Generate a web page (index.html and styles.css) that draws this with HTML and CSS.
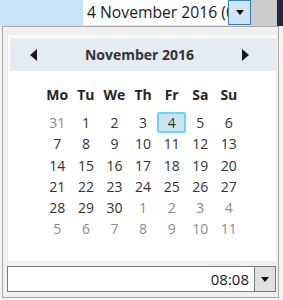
FILE: index.html
```html
<!DOCTYPE html>
<html lang="en">
<head>
  <meta charset="UTF-8">
  <title>Date picker</title>
  <link rel="stylesheet" href="styles.css">
</head>
<body>
  <div class="topbar">
    <div class="pane"></div>
    <div class="field">
      <span class="field-text">4 November 2016 (08:08)</span>
      <span class="drop-btn active"><span class="caret"></span></span>
    </div>
    <div class="gray"></div>
    <div class="dark"></div>
  </div>

  <div class="popup">
    <div class="calendar">
      <div class="cal-header">
        <span class="arrow left"></span>
        <span class="month">November 2016</span>
        <span class="arrow right"></span>
      </div>
      <div class="grid weekdays">
        <span>Mo</span><span>Tu</span><span>We</span><span>Th</span><span>Fr</span><span>Sa</span><span>Su</span>
      </div>
      <div class="grid days">
        <span class="other">31</span><span>1</span><span>2</span><span>3</span><span class="selected">4</span><span>5</span><span>6</span>
        <span>7</span><span>8</span><span>9</span><span>10</span><span>11</span><span>12</span><span>13</span>
        <span>14</span><span>15</span><span>16</span><span>17</span><span>18</span><span>19</span><span>20</span>
        <span>21</span><span>22</span><span>23</span><span>24</span><span>25</span><span>26</span><span>27</span>
        <span>28</span><span>29</span><span>30</span><span class="other">1</span><span class="other">2</span><span class="other">3</span><span class="other">4</span>
        <span class="other">5</span><span class="other">6</span><span class="other">7</span><span class="other">8</span><span class="other">9</span><span class="other">10</span><span class="other">11</span>
      </div>
    </div>
    <div class="time-row">
      <div class="time-input">08:08</div>
      <span class="drop-btn"><span class="caret"></span></span>
    </div>
  </div>
</body>
</html>
```

FILE: styles.css
```css
body {
  margin: 0;
  width: 283px;
  height: 300px;
  overflow: hidden;
  background: #f4f4f4;
  font-family: "Open Sans", "Noto Sans", sans-serif;
  color: #333;
}
.topbar {
  display: flex;
  height: 26px;
}
.pane {
  width: 83px;
  background: #c6e4f6;
}
.field {
  width: 168px;
  background: #fff;
  display: flex;
  border-bottom: 1px solid #e0e0e0;
}
.field-text {
  width: 141px;
  padding-left: 4px;
  overflow: hidden;
  white-space: nowrap;
  font-size: 15.7px;
  line-height: 24px;
  color: #1a1a1a;
}
.gray {
  width: 26px;
  background: #cdcdcd;
}
.dark {
  flex: 1;
  background: #1c2740;
}
.drop-btn {
  width: 23px;
  box-sizing: border-box;
  border: 1px solid #7a7a7a;
  background: #e1e1e1;
  display: flex;
  align-items: center;
  justify-content: center;
}
.drop-btn.active {
  background: #cce6f8;
  border-color: #3c7fb1;
}
.caret {
  width: 0;
  height: 0;
  border-left: 4px solid transparent;
  border-right: 4px solid transparent;
  border-top: 5px solid #111;
}
.popup {
  margin-left: 2px;
  width: 277px;
  height: 272px;
  box-sizing: border-box;
  border: 1px solid #a9a9a9;
  background: #f0f0f0;
  padding: 8px 2px 0 5px;
  display: flex;
  flex-direction: column;
  gap: 5px;
}
.calendar {
  background: #fff;
  height: 226px;
  padding: 3px 0 0 2px;
  box-sizing: border-box;
}
.cal-header {
  height: 33px;
  background: #e6ebf1;
  display: flex;
  align-items: center;
  justify-content: space-between;
  padding: 0 27px 0 20px;
}
.month {
  font-weight: bold;
  font-size: 14px;
  color: #333;
}
.arrow {
  width: 0;
  height: 0;
  border-top: 6px solid transparent;
  border-bottom: 6px solid transparent;
}
.arrow.left {
  border-right: 7px solid #1a1a1a;
}
.arrow.right {
  border-left: 7px solid #1a1a1a;
}
.grid {
  display: grid;
  grid-template-columns: repeat(7, 28.6px);
  width: 200px;
  margin: 0 auto;
  text-align: center;
}
.weekdays {
  margin-top: 14px;
  font-weight: bold;
  font-size: 14px;
  line-height: 20px;
  color: #262626;
}
.days {
  margin-top: 7px;
  grid-auto-rows: 21.3px;
  font-size: 14px;
  line-height: 21px;
}
.days span {
  box-sizing: border-box;
}
.days .other {
  color: #8c8c8c;
}
.days .selected {
  background: #cde4ee;
  border: 2px solid #6cd5f6;
  border-radius: 2px;
  line-height: 17px;
}
.time-row {
  display: flex;
  height: 26px;
  margin-left: -1px;
}
.time-input {
  flex: 1;
  background: #fff;
  border: 1px solid #7a7a7a;
  border-right: none;
  text-align: right;
  padding-right: 5px;
  font-size: 15px;
  line-height: 24px;
  color: #1a1a1a;
}
.time-row .drop-btn {
  width: 22px;
}
```
